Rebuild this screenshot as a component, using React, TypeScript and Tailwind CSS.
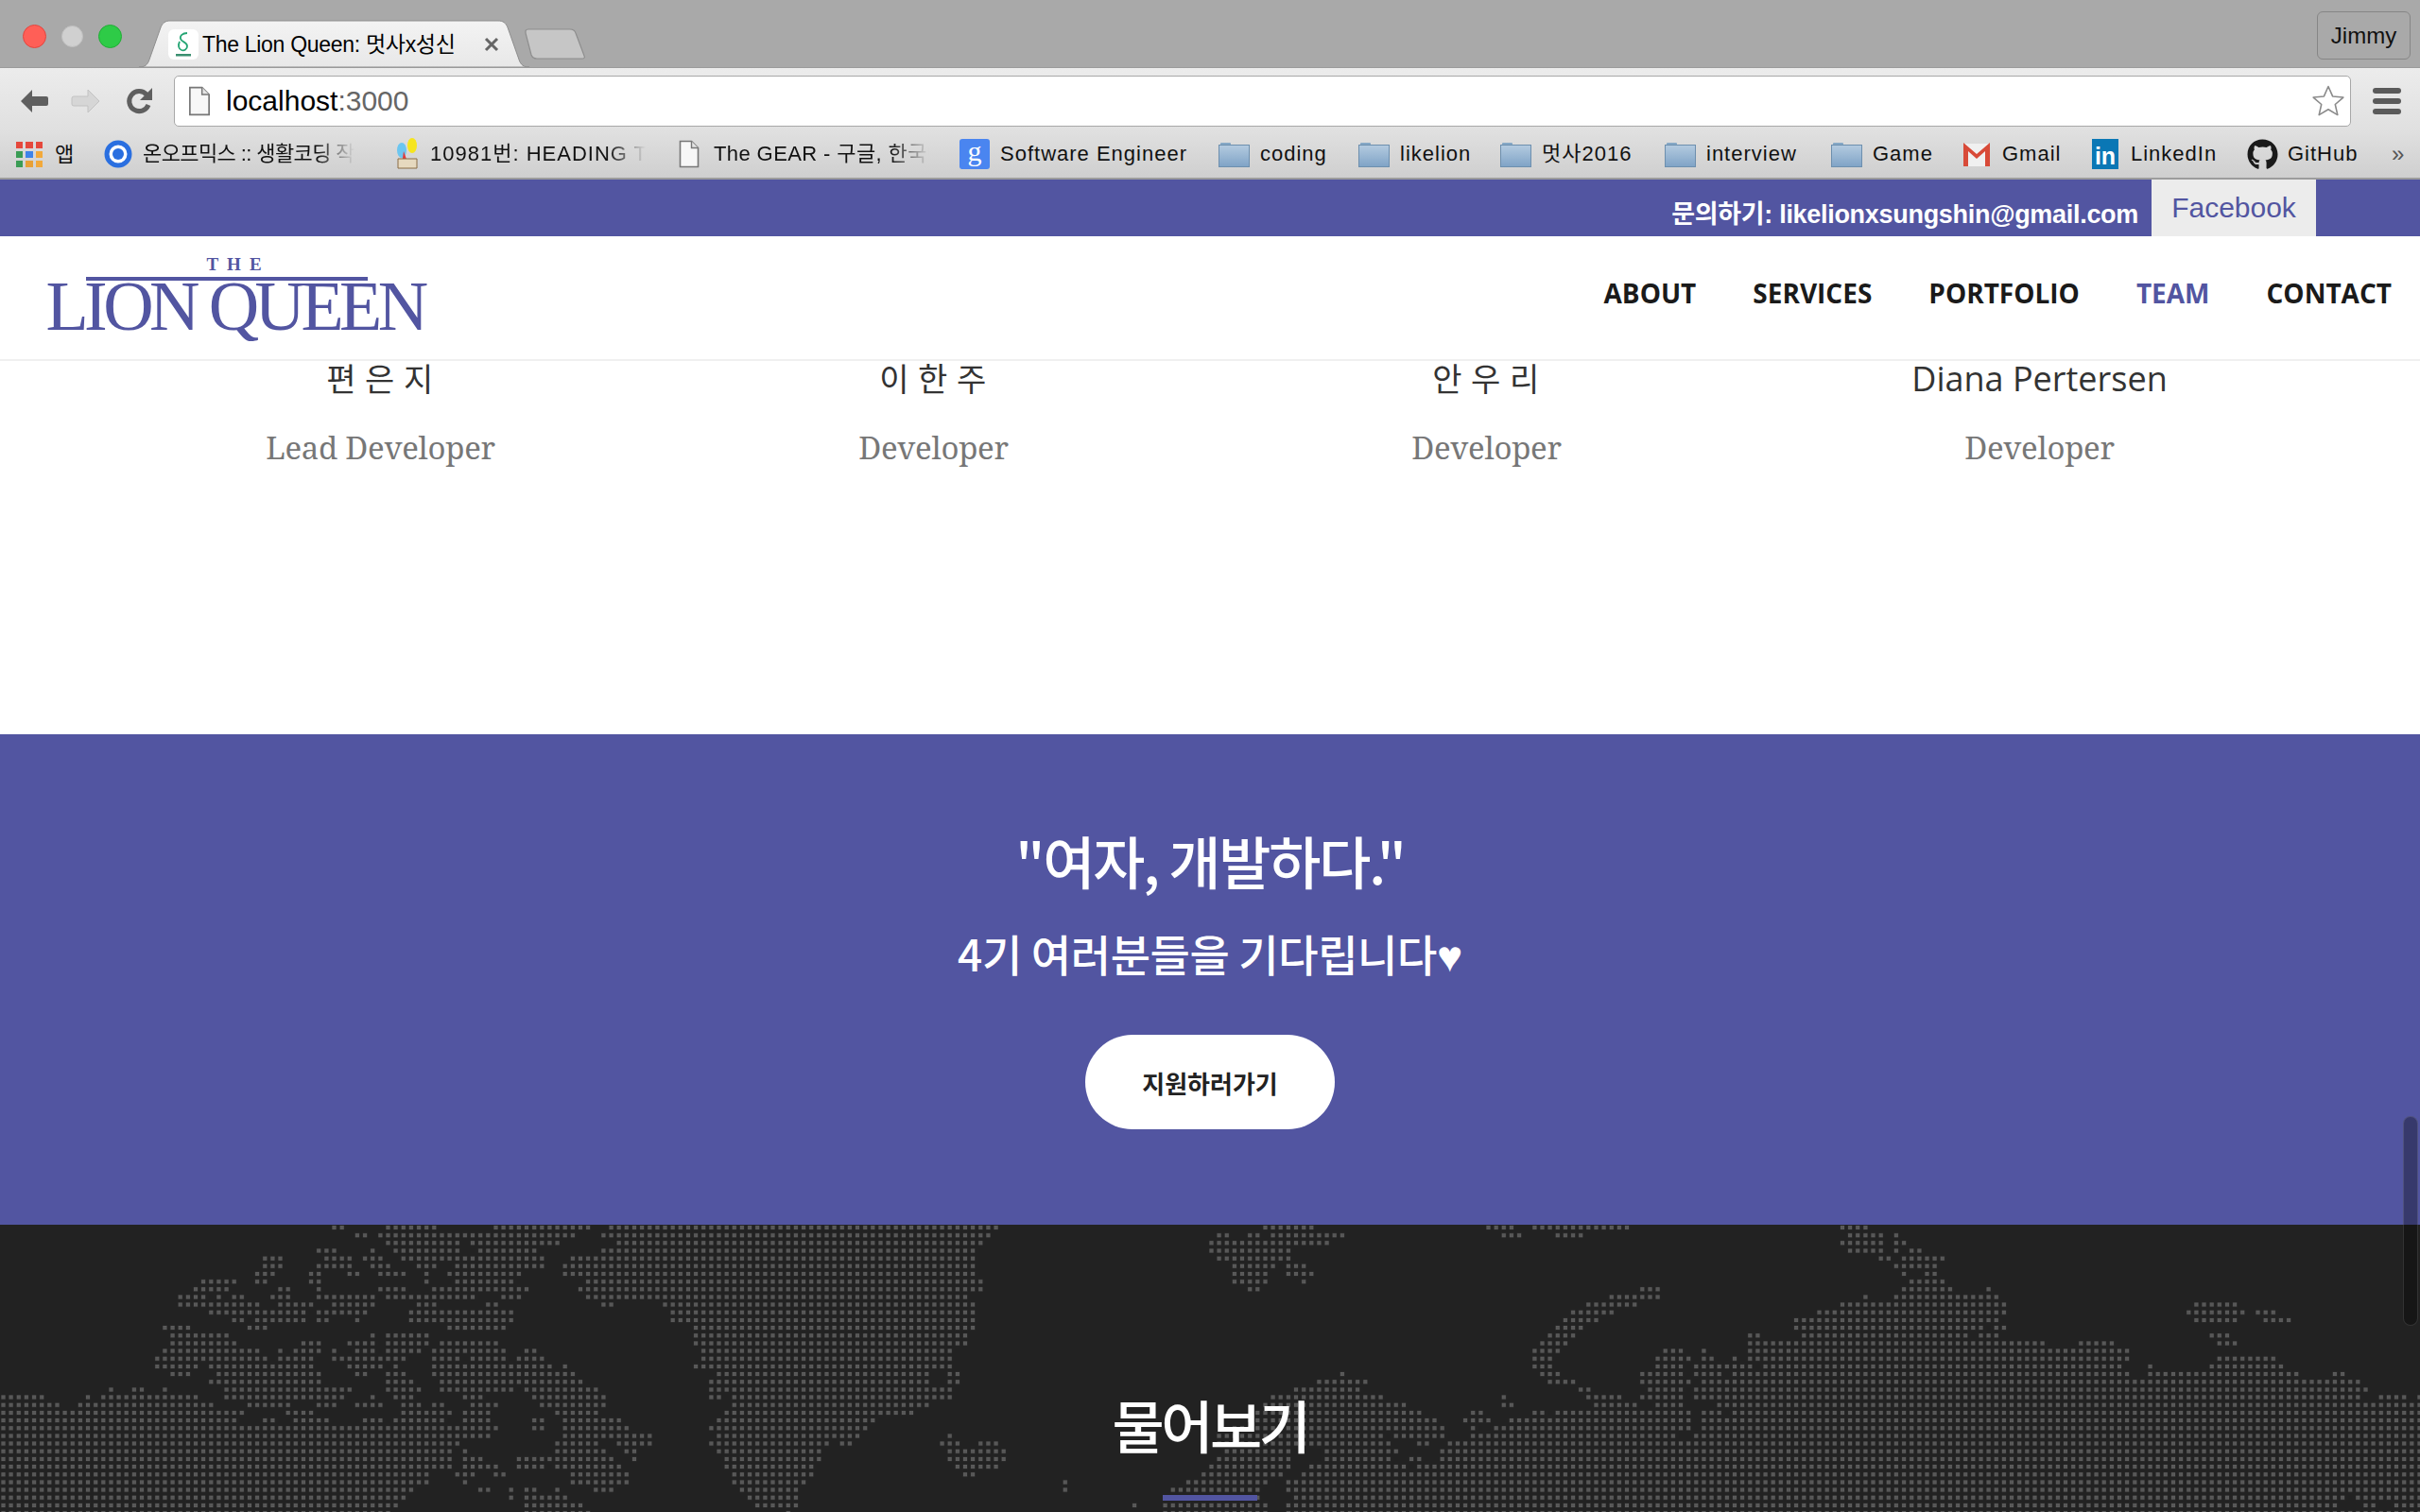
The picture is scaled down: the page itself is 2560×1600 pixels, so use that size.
import React from "react";
import { FaGithub } from "react-icons/fa";

const SANS = "font-['Liberation_Sans','Noto_Sans_CJK_KR',sans-serif]";
const OPEN = "font-['Open_Sans','Noto_Sans_CJK_KR',sans-serif]";
const KR = "font-['Noto_Sans_CJK_KR','Noto_Sans',sans-serif]";

const Z6: number[][] = [
  [550,575,640,727,820,983,1010,1568],
  [590,612,628,955,998,1568],
  [640,765,780,930,1022,1568],
  [525,560,615,625,652,765,793,893,998,1568],
  [437,470,538,587,602,637,665,905,947,1568],
  [437,470,525,587,615,650,690,727,755,905,935,1568],
  [423,458,513,535,575,600,628,675,703,715,743,867,935,1568],
  [335,395,423,446,513,535,703,715,755,855,972,1568],
  [322,382,462,485,525,535,628,675,716,880,960,1568],
  [296,345,360,370,385,408,449,485,525,625,640,790,832,867,972,1568],
  [296,433,462,522,550,625,690,727,806,830,998,1020,1100,1568],
  [347,510,525,612,678,855,1112,1568],
  [385,408,423,510,525,548,588,600,678,855,1112,1568],
  [270,318,410,446,742,842,1150,1568],
  [283,382,615,625,640,715,1150,1568],
  [283,395,500,535,575,625,640,715,730,830,1150,1568],
  [270,433,462,472,487,535,550,560,588,625,640,702,716,842,870,893,1162,1568],
  [258,446,462,522,550,675,716,765,780,842,857,905,1162,1568],
  [258,330,347,522,575,637,652,662,716,918,933,943,1150,1568],
  [283,318,360,535,588,612,640,675,716,955,1188,1543],
  [347,535,640,688,730,968,1175,1543],
  [180,190,218,242,270,280,372,585,640,700,730,855,870,995,1175,1568],
  [0,75,143,153,168,330,372,573,615,625,652,688,768,803,882,1007,1175,1200,1213,1568],
  [0,100,130,356,410,485,525,560,588,637,665,700,716,740,780,830,895,1007,1213,1543],
  [0,408,475,522,665,752,768,816,920,995,1200,1517],
  [0,395,435,458,487,548,602,637,652,740,768,816,882,905,933,1032,1188,1454],
  [0,828,882,905,933,1045,1175,1441],
  [0,816,933,1083,1188,1428],
  [0,765,920,995,1022,1083,1175,1377,1392,1415,1558,1568],
  [0,752,768,778,920,1007,1035,1058,1188,1364],
  [0,752,768,803,857,1020,1047,1057,1200,1364],
  [0,752,768,828,857,905,920,1032,1200,1352],
  [0,715,755,790,818,842,945,1045,1213,1352],
  [0,715,768,778,945,1045,1213,1340],
  [0,688,793,816,845,855,870,893,920,930,985,1020,1226,1326],
  [0,675,845,855,870,943,1240,1326],
  [0,662,870,968,1252,1326],
  [0,650,870,980,1300,1310],
];
const Z7: number[][] = [
  [0,90,527,612,897,945,973,1135,1483,1535],
  [0,77,450,473,500,525,540,662,922,957,1012,1060,1497,1560],
  [0,64,437,638,1484,1560],
  [0,52,437,575,1497,1560],
  [0,52,450,575,1548,1568],
  [0,52,475,550,565,600],
  [0,52,475,537,565,612],
  [0,64,475,537,590,600],
  [0,64,500,525,1150,1187],
  [0,40,1100,1187,1522,1532],
  [0,52,1063,1148,1484,1568],
  [0,52,1037,1110,1446,1568],
  [0,52,1024,1085,1408,1568],
  [0,52,1012,1060,1408,1568],
  [0,40,998,1047,1332,1355,1420,1568],
  [0,40,985,1034,1332,1568],
  [0,14,973,1020,1190,1225,1255,1265,1332,1568],
  [0,14,973,1008,1178,1238,1255,1278,1305,1315,1332,1568],
  [0,14,973,1008,1178,1225,1242,1340,1355,1568],
  [0,26,655,665,985,1020,1152,1225,1242,1290,1305,1568],
  [0,26,615,702,998,1047,1152,1238,1255,1568],
  [0,14,578,690,1050,1072,1165,1225,1242,1568],
  [0,14,540,727,922,932,1063,1123,1152,1225,1242,1568],
  [527,765,922,945,1075,1148,1178,1225,1280,1568],
  [515,790,870,895,973,997,1012,1238,1255,1290,1305,1568],
  [500,816,860,907,935,1238,1255,1568],
  [480,828,870,882,910,1238,1255,1568],
  [0,14,450,730,743,828,870,1213,1242,1568],
  [0,26,52,90,450,742,780,805,832,1568],
  [0,102,462,575,628,752,820,1568],
  [0,102,450,575,628,742,768,792,820,1568],
  [16,90,437,575,602,765,780,1568],
  [28,52,425,562,590,1568],
  [195,205,400,537,565,1568],
  [195,205,373,523,565,1568],
  [360,520,578,1568],
  [310,320,360,530,565,1568],
  [360,535,565,1568],
];
const Z8: number[][] = [
  [],
  [0,25],
  [0,48],
  [0,25,55,92],
  [0,5,30,160],
  [10,140],
  [30,48,100,140],
  [55,160],
  [30,185,282,298],
  [8,320],
  [0,345,898,1028],
  [0,345,875,1050,1080,1140],
  [0,325,898,1028,1103,1187],
  [0,275,305,345],
  [0,230,260,322,945,1005],
  [0,458,555,662,965,1028],
  [0,710],
  [0,710,965,1140],
  [0,688,760,778,942,1165],
  [0,710,760,935,942,1210,1308,1345],
  [0,1390],
  [0,1413],
  [0,1390,1445,1530,1555,1568],
  [0,1568],[0,1568],[0,1568],[0,1568],[0,1568],[0,1568],[0,1568],[0,1568],[0,1568],[0,1568],[0,1568],[0,1568],
  [0,1345,1380,1568],
  [0,1320,1400,1440,1490,1568],
  [0,1568],
];

const PITCH = 8.14;
const X0 = 3.5;
function dotPath() {
  let d = "";
  for (let r = 0; r < 38; r++) {
    const cols = new Set<number>();
    const add = (src: number[], off: number, k: number) => {
      for (let i = 0; i < src.length; i += 2) {
        const a = Math.round((off + src[i] / k + 2.5 - X0) / PITCH);
        const b = Math.round((off + src[i + 1] / k - 2.5 - X0) / PITCH);
        for (let c = a; c <= b; c++) cols.add(c);
      }
    };
    add(Z6[r], 0, 1.568);
    add(Z7[r], 1000, 1.568);
    add(Z8[r], 2000, 2.8);
    const y = 3 + r * 8.165;
    cols.forEach((c) => {
      const x = X0 + c * PITCH;
      d += `M${(x - 2).toFixed(1)} ${(y - 2).toFixed(1)}h4v4h-4z`;
    });
  }
  return d;
}

function Folder() {
  return (
    <svg width="33" height="30" viewBox="0 0 33 30" className="shrink-0">
      <defs>
        <linearGradient id="fld" x1="0" y1="0" x2="0" y2="1">
          <stop offset="0" stopColor="#b4cbe0" />
          <stop offset="1" stopColor="#7fa3c6" />
        </linearGradient>
      </defs>
      <path d="M2 4a1 1 0 0 1 1-1h9a1 1 0 0 1 1 1v2H2z" fill="#86a8c6" />
      <rect x="0.5" y="5.5" width="32" height="23" fill="url(#fld)" stroke="#6d8fae" />
    </svg>
  );
}

function DocIcon({ w = 22, h = 30 }: { w?: number; h?: number }) {
  return (
    <svg width={w} height={h} viewBox="0 0 22 30" className="shrink-0">
      <path d="M1.5 1.5h12l7 7v20h-19z" fill="#f7f7f7" stroke="#777" strokeWidth="1.6" />
      <path d="M13.5 1.5v7h7" fill="#e4e4e4" stroke="#777" strokeWidth="1.4" />
    </svg>
  );
}

function BM({ icon, label, w, fade, iconGap = "gap-[11px]", track = "tracking-[1px]" }: { icon: React.ReactNode; label: string; w: string; fade?: boolean; iconGap?: string; track?: string }) {
  return (
    <div className={`flex items-center ${iconGap} shrink-0 ${w}`}>
      {icon}
      <span className={`whitespace-nowrap overflow-hidden text-[22px] leading-[28px] ${track} text-[#111] ${SANS} ${fade ? "max-w-[228px] [mask-image:linear-gradient(to_right,black_82%,transparent)]" : ""}`}>
        {label}
      </span>
    </div>
  );
}

function Apps() {
  const c = ["#e5483c","#e5483c","#e5483c","#3b9c55","#3e83ea","#f2a93b","#3b9c55","#e8a035","#f2a93b"];
  return (
    <div className="grid grid-cols-3 gap-[3px] w-[28px] shrink-0">
      {c.map((x, i) => (
        <div key={i} className="h-[7px]" style={{ background: x }} />
      ))}
    </div>
  );
}

function NavLink({ children, active }: { children: string; active?: boolean }) {
  return <span className={`text-[28px] font-bold leading-none whitespace-nowrap ${OPEN} ${active ? "text-[#5255a1]" : "text-[#1a1a1a]"}`}>{children}</span>;
}

function Member({ name, role, spaced }: { name: string; role: string; spaced?: boolean }) {
  return (
    <div className="flex flex-col items-center">
      <div className={`h-[38px] flex items-center text-[#333] ${OPEN} ${spaced ? "text-[34px] tracking-[0.28em] pl-[8px]" : "text-[36px]"} leading-none whitespace-nowrap`}>{name}</div>
      <div className="mt-[34px] text-[#777] font-['Noto_Serif','DejaVu_Serif',serif] text-[33px] tracking-[-0.3px] leading-[40px] whitespace-nowrap">{role}</div>
    </div>
  );
}

export default function App() {
  return (
    <div className="w-[2560px] h-[1600px] overflow-hidden relative bg-white">
      {/* tab strip */}
      <div className="h-[72px] bg-[#a9a9a9] border-b border-[#9a9a9a] flex items-end pl-[24px] pr-[10px] relative">
        <div className="flex items-center gap-[16px] self-start mt-[26px] mr-[18px]">
          <div className="w-[25px] h-[25px] rounded-full bg-[#ff5f57] border border-[#e2463f]" />
          <div className="w-[23px] h-[23px] rounded-full bg-[#d0d0d0] border border-[#c0c0c0]" />
          <div className="w-[25px] h-[25px] rounded-full bg-[#2ecb47] border border-[#22ad37]" />
        </div>
        <div className="relative w-[413px] h-[50px] shrink-0">
          <svg width="413" height="50" viewBox="0 0 413 50" className="absolute inset-0">
            <defs>
              <linearGradient id="tab" x1="0" y1="0" x2="0" y2="1">
                <stop offset="0" stopColor="#f3f3f3" />
                <stop offset="1" stopColor="#e8e8e8" />
              </linearGradient>
            </defs>
            <path d="M0 50c6 0 9-2 11-8L23 8c2-5 5-7 10-7h347c5 0 8 2 10 7l12 34c2 6 5 8 11 8z" fill="url(#tab)" stroke="#8e8e8e" strokeWidth="1" />
          </svg>
          <div className="relative flex items-center h-full pl-[31px] pt-[2px]">
            <div className="w-[32px] h-[32px] bg-white rounded-[6px] flex items-center justify-center shrink-0">
              <svg width="24" height="28" viewBox="0 0 24 28">
                <path d="M16 2c-5 0-8 3-7 6 1 4 7 3 7 8 0 3-3 5-6 4-3-1-4-5-2-9" fill="none" stroke="#25a574" strokeWidth="1.8" />
                <rect x="4" y="24" width="16" height="2.5" fill="#3a8f70" />
              </svg>
            </div>
            <span className={`ml-[4px] w-[266px] text-[23px] leading-none text-black whitespace-nowrap ${SANS} tracking-[-0.3px]`}>The Lion Queen: 멋사x성신</span>
            <svg width="16" height="16" viewBox="0 0 16 16" className="ml-[32px] shrink-0">
              <path d="M2 2l12 12M14 2L2 14" stroke="#666" strokeWidth="3" />
            </svg>
          </div>
        </div>
        <svg width="66" height="34" viewBox="0 0 66 34" className="-ml-[6px] mb-[7px] shrink-0">
          <path d="M2 3c0-1 1-2 3-2h44c3 0 5 1 6 4l9 24c1 2 0 3-2 3H14c-3 0-5-1-6-4L2 5z" fill="#c6c6c6" stroke="#8e8e8e" strokeWidth="1.2" />
        </svg>
        <div className={`absolute right-[10px] top-[12px] w-[99px] h-[51px] rounded-[6px] border border-[#868686] flex items-center justify-center text-[24px] text-[#111] ${SANS}`}>Jimmy</div>
      </div>

      {/* toolbar */}
      <div className="h-[66px] pt-[8px] pb-[4px] bg-gradient-to-b from-[#ececec] to-[#e0e0e0] flex items-center pl-[20px] pr-[20px]">
        <svg width="32" height="28" viewBox="0 0 32 28" className="shrink-0">
          <path d="M14 2L2 14l12 12v-7h15a2 2 0 0 0 2-2v-6a2 2 0 0 0-2-2H14z" fill="#5f5f5f" />
        </svg>
        <svg width="32" height="28" viewBox="0 0 32 28" className="ml-[23px] shrink-0">
          <path d="M18 2l12 12-12 12v-7H3a2 2 0 0 1-2-2v-6a2 2 0 0 1 2-2h15z" fill="#d6d6d6" stroke="#c2c2c2" />
        </svg>
        <svg width="30" height="30" viewBox="0 0 30 30" className="ml-[26px] shrink-0">
          <path d="M24 19a10.5 10.5 0 1 1-2-11" fill="none" stroke="#5f5f5f" strokeWidth="5" />
          <path d="M28 1v13H15z" fill="#5f5f5f" />
        </svg>
        <div className="ml-[21px] flex-1 h-[54px] bg-white rounded-[5px] border border-[#a8a8a8] flex items-center pl-[14px] pr-[4px]">
          <DocIcon w={24} h={32} />
          <span className={`ml-[16px] text-[30px] leading-none text-black ${SANS}`}>
            localhost<span className="text-[#666]">:3000</span>
          </span>
          <svg width="38" height="38" viewBox="0 0 24 24" className="ml-auto shrink-0">
            <path d="M12 2.2l2.9 6.6 7.1.7-5.4 4.7 1.6 7-6.2-3.7-6.2 3.7 1.6-7L2 9.5l7.1-.7z" fill="#fff" stroke="#8a8a8a" strokeWidth="1" strokeLinejoin="round" />
          </svg>
        </div>
        <div className="ml-[23px] w-[30px] flex flex-col gap-[5px] shrink-0">
          <div className="h-[6px] rounded-[3px] bg-[#5a5a5a]" />
          <div className="h-[6px] rounded-[3px] bg-[#5a5a5a]" />
          <div className="h-[6px] rounded-[3px] bg-[#5a5a5a]" />
        </div>
      </div>

      {/* bookmarks */}
      <div className="h-[52px] bg-gradient-to-b from-[#e0e0e0] to-[#cfcfcf] border-b-2 border-[#9c9c9c] flex items-center pl-[17px]">
        <Apps />
        <span className={`ml-[13px] w-[52px] text-[22px] text-[#111] ${SANS} shrink-0`}>앱</span>
        <BM w="w-[305px]" fade track="tracking-[-0.6px]" label="온오프믹스 :: 생활코딩 작" icon={
          <svg width="30" height="30" viewBox="0 0 30 30" className="shrink-0">
            <circle cx="15" cy="15" r="12" fill="#fff" stroke="#2a6fe0" strokeWidth="5" />
            <circle cx="15" cy="15" r="6" fill="#2a6fe0" />
          </svg>} />
        <BM w="w-[303px]" fade label="10981번: HEADING T" iconGap="gap-[10px]" icon={
          <svg width="30" height="34" viewBox="0 0 30 34" className="shrink-0">
            <ellipse cx="10" cy="13" rx="5" ry="8" fill="#6cc6f0" />
            <ellipse cx="21" cy="8" rx="5" ry="8" fill="#f6e51e" />
            <path d="M12 14l5 14h-7z" fill="#e23b3b" />
            <path d="M6 22h20v10H6z" fill="#e6d9bf" stroke="#8a6c45" />
          </svg>} />
        <BM w="w-[297px]" fade track="tracking-[0.4px]" label="The GEAR - 구글, 한국어" iconGap="gap-[15px]" icon={<DocIcon />} />
        <BM w="w-[274px]" label="Software Engineer" icon={
          <div className="w-[32px] h-[32px] rounded-[3px] bg-[#4a85f0] flex items-center justify-center pb-[6px] text-white text-[30px] leading-none shrink-0 font-['Liberation_Serif',serif]">g</div>} />
        <BM w="w-[148px]" label="coding" icon={<Folder />} />
        <BM w="w-[150px]" label="likelion" icon={<Folder />} />
        <BM w="w-[174px]" label="멋사2016" icon={<Folder />} />
        <BM w="w-[176px]" label="interview" icon={<Folder />} />
        <BM w="w-[140px]" label="Game" icon={<Folder />} />
        <BM w="w-[136px]" label="Gmail" iconGap="gap-[13px]" icon={
          <svg width="28" height="26" viewBox="0 0 28 26" className="shrink-0">
            <path d="M0 2h28v24H0z" fill="#f0f0f0" />
            <path d="M0 26V1l14 12L28 1v25h-5V10l-9 8-9-8v16z" fill="#d84a38" />
          </svg>} />
        <BM w="w-[164px]" label="LinkedIn" iconGap="gap-[13px]" icon={
          <div className={`w-[28px] h-[32px] bg-[#0a77b5] flex items-end justify-center pb-[1px] text-white text-[25px] font-bold leading-none shrink-0 ${SANS}`}>in</div>} />
        <BM w="w-[153px]" label="GitHub" iconGap="gap-[10px]" icon={<FaGithub className="text-[33px] text-[#1a1a1a] shrink-0" />} />
        <span className={`text-[24px] text-[#555] ${SANS}`}>»</span>
      </div>

      {/* top bar */}
      <div className="h-[60px] bg-[#5255a1] flex justify-end items-stretch pr-[110px]">
        <span className={`self-end pb-[6px] text-[27px] leading-[34px] font-bold text-white whitespace-nowrap ${SANS} tracking-[-0.3px]`}>문의하기: likelionxsungshin@gmail.com</span>
        <div className={`ml-[14px] w-[174px] bg-[#ececec] flex items-center justify-center text-[#5255a1] text-[30px] ${SANS} pb-[1px]`}>Facebook</div>
      </div>

      {/* header */}
      <div className="h-[132px] bg-white border-b-2 border-[#f0f0f0] flex items-center justify-between pl-[50px] pr-[30px]">
        <div className="flex flex-col items-center w-[400px] -mt-[4px] font-['Liberation_Serif',serif] text-[#5255a1]">
          <div className="text-[19px] font-bold tracking-[9px] leading-[19px] pl-[4px]">THE</div>
          <div className="w-[298px] h-[4px] bg-[#5255a1] mt-[4px] -ml-[21px]" />
          <div className="text-[74px] leading-[66px] tracking-[-4.6px] whitespace-nowrap -mt-[6px] -ml-[3px] h-[65px]">LION QUEEN</div>
        </div>
        <div className="flex items-center gap-[60px] -mt-[10px]">
          <NavLink>ABOUT</NavLink>
          <NavLink>SERVICES</NavLink>
          <NavLink>PORTFOLIO</NavLink>
          <NavLink active>TEAM</NavLink>
          <NavLink>CONTACT</NavLink>
        </div>
      </div>

      {/* team */}
      <div className="h-[395px] bg-white">
        <div className="w-[2340px] mx-auto grid grid-cols-4">
          <Member name="편은지" role="Lead Developer" spaced />
          <Member name="이한주" role="Developer" spaced />
          <Member name="안우리" role="Developer" spaced />
          <Member name="Diana Pertersen" role="Developer" />
        </div>
      </div>

      {/* CTA */}
      <div className="h-[519px] bg-[#5255a1] flex flex-col items-center">
        <h2 className={`mt-[93px] text-[60px] leading-[80px] font-medium text-white tracking-[-2.2px] ${KR}`}>"여자, 개발하다."</h2>
        <p className={`mt-[28px] text-[46px] leading-[60px] font-medium text-white tracking-[-0.4px] ${KR}`}>4기 여러분들을 기다립니다<span className="font-['Liberation_Sans',sans-serif]">♥</span></p>
        <button className={`mt-[53px] w-[264px] h-[100px] rounded-[50px] bg-white text-[#222] text-[26px] font-bold ${KR}`}>지원하러가기</button>
      </div>

      {/* dark */}
      <div className="h-[304px] bg-[#222222] relative overflow-hidden flex flex-col items-center">
        <svg width="2560" height="304" viewBox="0 0 2560 304" className="absolute inset-0">
          <path d={dotPath()} fill="#575757" stroke="#ffffff" strokeOpacity="0.05" strokeWidth="1.2" />
        </svg>
        <h2 className={`relative mt-[171px] text-[60px] leading-[80px] font-medium text-white tracking-[-3.5px] ${KR}`}>물어보기</h2>
        <div className="relative mt-[35px] w-[100px] h-[6px] bg-[#5255a1]" />
      </div>

      {/* overlay scrollbar */}
      <div className="absolute left-[2542px] top-[1181px] w-[16px] h-[222px] rounded-[8px] bg-[rgba(0,0,0,0.33)] border border-[rgba(255,255,255,0.12)]" />
    </div>
  );
}
